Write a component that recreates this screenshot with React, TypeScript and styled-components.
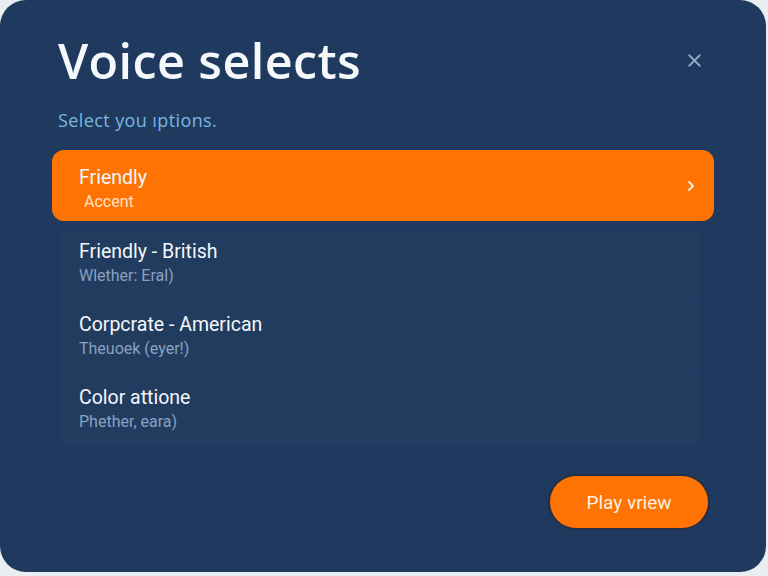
import React from 'react';
import styled, { createGlobalStyle } from 'styled-components';
import { ChevronRight, X } from 'lucide-react';

const VOICES = [
  { title: 'Friendly', sub: 'Accent' },
  { title: 'Friendly - British', sub: 'Wlether: Eral)' },
  { title: 'Corpcrate - American', sub: 'Theuoek (eyer!)' },
  { title: 'Color attione', sub: 'Phether, eara)' },
];

export default function App() {
  const selected = 0;
  return (
    <>
      <GlobalStyle />
      <Card>
        <Header>
          <Title>Voice selects</Title>
          <CloseButton aria-label="Close">
            <X size={21} strokeWidth={2.2} />
          </CloseButton>
        </Header>
        <Subtitle>Select you ıptions.</Subtitle>
        <List>
          {VOICES.map((v, i) => (
            <Row key={v.title} active={i === selected}>
              <RowText>
                <RowTitle>{v.title}</RowTitle>
                <RowSub active={i === selected}>{v.sub}</RowSub>
              </RowText>
              {i === selected && (
                <Chevron>
                  <ChevronRight size={16} strokeWidth={3} />
                </Chevron>
              )}
            </Row>
          ))}
        </List>
        <Footer>
          <PlayButton>Play vriew</PlayButton>
        </Footer>
      </Card>
    </>
  );
}

const GlobalStyle = createGlobalStyle`
  body {
    margin: 0;
    background: #e9eef3;
    font-family: Roboto, "Liberation Sans", sans-serif;
  }
`;

const Card = styled.div`
  box-sizing: border-box;
  width: 766px;
  height: 572px;
  background: #1f3a5e;
  border-radius: 26px;
  padding: 32px 52px 0 52px;
  display: flex;
  flex-direction: column;
`;

const Header = styled.div`
  display: flex;
  align-items: center;
  justify-content: space-between;
  padding-left: 6px;
`;

const Title = styled.h1`
  margin: 0;
  font-family: "Open Sans", Inter, sans-serif;
  font-weight: 600;
  font-size: 48.5px;
  line-height: 56px;
  color: #f6f9fc;
  letter-spacing: 0.4px;
`;

const CloseButton = styled.button`
  background: none;
  border: none;
  padding: 0;
  margin-right: 9px;
  color: #8ea7c6;
  display: flex;
  cursor: pointer;
`;

const Subtitle = styled.p`
  margin: 20px 0 0 6px;
  font-family: "Open Sans", sans-serif;
  font-size: 18px;
  line-height: 24px;
  letter-spacing: 0.4px;
  color: #79b6e0;
`;

const List = styled.div`
  margin-top: 18px;
  display: flex;
  flex-direction: column;
  gap: 2px;
`;

const Row = styled.div<{ active: boolean }>`
  height: 71px;
  box-sizing: border-box;
  display: flex;
  align-items: center;
  justify-content: space-between;
  background: ${({ active }) => (active ? '#ff7302' : 'rgba(255, 255, 255, 0.012)')};
  margin: ${({ active }) => (active ? '0 0 4px 0' : '0 14px 0 8px')};
  padding: ${({ active }) => (active ? '4px 15px 0 27px' : '0 22px 0 19px')};
  border-bottom: ${({ active }) => (active ? 'none' : '1px solid rgba(255, 255, 255, 0.03)')};
  border-radius: ${({ active }) => (active ? '12px' : '0')};
`;

const RowText = styled.div`
  display: flex;
  flex-direction: column;
  gap: 2px;
  padding-top: 2px;
`;

const RowTitle = styled.div`
  font-size: 19.5px;
  line-height: 24px;
  color: #f4f7fb;
`;

const RowSub = styled.div<{ active: boolean }>`
  font-size: 16px;
  line-height: 20px;
  color: ${({ active }) => (active ? '#ffe2c6' : '#8aa1c0')};
  padding-left: ${({ active }) => (active ? '5px' : '0')};
`;

const Chevron = styled.span`
  display: flex;
  color: #ffe9d2;
  margin-top: -3px;
`;

const Footer = styled.div`
  display: flex;
  justify-content: flex-end;
  margin-top: 32px;
  padding-right: 6px;
`;

const PlayButton = styled.button`
  width: 158px;
  height: 52px;
  border: none;
  border-radius: 26px;
  background: #ff7302;
  box-shadow: 0 0 0 2px rgba(40, 30, 30, 0.35);
  color: #fff1e2;
  font-family: Roboto, "Liberation Sans", sans-serif;
  font-size: 19px;
  cursor: pointer;
`;
